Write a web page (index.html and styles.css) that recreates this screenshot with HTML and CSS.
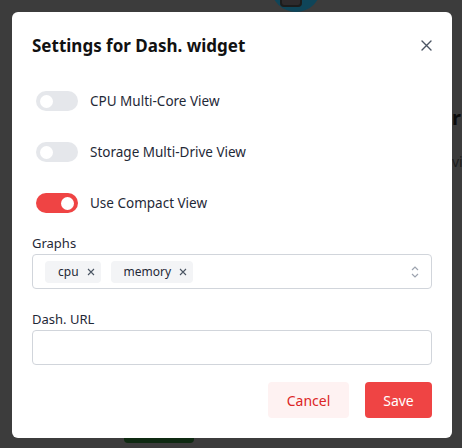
FILE: index.html
```html
<!DOCTYPE html>
<html>
<head>
<meta charset="utf-8">
<link rel="stylesheet" href="styles.css">
</head>
<body>
<div class="backdrop">
  <div class="bg-avatar"><span class="bg-avatar-icon"></span></div>
  <div class="bg-text bg-title">r</div>
  <div class="bg-text bg-sub">vi</div>
  <div class="bg-green"></div>
</div>
<div class="modal">
  <div class="modal-head">
    <h2 class="modal-title">Settings for Dash. widget</h2>
    <button class="close-btn" aria-label="Close">
      <svg width="11" height="11" viewBox="0 0 11 11"><path d="M1 1L10 10M10 1L1 10" stroke="#4b5563" stroke-width="1.4" fill="none" stroke-linecap="round"/></svg>
    </button>
  </div>
  <div class="toggles">
    <label class="toggle-row"><span class="switch"><span class="knob"></span></span><span class="toggle-label">CPU Multi-Core View</span></label>
    <label class="toggle-row"><span class="switch"><span class="knob"></span></span><span class="toggle-label">Storage Multi-Drive View</span></label>
    <label class="toggle-row"><span class="switch on"><span class="knob"></span></span><span class="toggle-label">Use Compact View</span></label>
  </div>
  <div class="field">
    <div class="field-label">Graphs</div>
    <div class="select">
      <span class="chip">cpu<svg width="8" height="8" viewBox="0 0 8 8"><path d="M1 1L7 7M7 1L1 7" stroke="#4b5563" stroke-width="1.1" fill="none"/></svg></span>
      <span class="chip">memory<svg width="8" height="8" viewBox="0 0 8 8"><path d="M1 1L7 7M7 1L1 7" stroke="#4b5563" stroke-width="1.1" fill="none"/></svg></span>
      <svg class="chevrons" width="8" height="14" viewBox="0 0 8 14"><path d="M1 5L4 2L7 5M1 9L4 12L7 9" stroke="#9ca3af" stroke-width="1.2" fill="none"/></svg>
    </div>
  </div>
  <div class="field field-url">
    <div class="field-label">Dash. URL</div>
    <div class="input"></div>
  </div>
  <div class="actions">
    <button class="btn btn-cancel">Cancel</button>
    <button class="btn btn-save">Save</button>
  </div>
</div>
</body>
</html>
```
FILE: styles.css
```css
* { box-sizing: border-box; }
html, body { margin: 0; padding: 0; }
body {
  width: 462px;
  height: 448px;
  background: #3c3c3c;
  font-family: "Noto Sans", "Open Sans", sans-serif;
  color: #111827;
  position: relative;
  overflow: hidden;
  padding: 12px 10px 10px 12px;
}
.backdrop { position: absolute; inset: 0; z-index: 0; }
.bg-avatar {
  position: absolute; left: 271px; top: -38px; width: 50px; height: 50px;
  border-radius: 50%; background: #0f4559;
}
.bg-avatar-icon {
  position: absolute; left: 9px; top: 30px; width: 22px; height: 15px;
  border: 2px solid #1c1c1c; border-radius: 4px; background: #2e2a2c;
}
.bg-text { position: absolute; color: #111; font-weight: 700; }
.bg-title { left: 452px; top: 104px; font-size: 20px; color: #0b0b0b; }
.bg-sub { left: 452px; top: 152px; font-size: 14px; font-weight: 400; color: #1c1c1c; }
.bg-green { position: absolute; left: 124px; top: 436px; width: 70px; height: 7px; background: #0f2a12; border-radius: 0 0 4px 4px; }

.modal {
  position: relative; z-index: 1;
  width: 440px; height: 426px;
  background: #fff;
  border-radius: 6px;
  padding: 22px 20px 20px 20px;
  display: flex; flex-direction: column;
}
.modal-head { display: flex; align-items: center; justify-content: space-between; height: 24px; }
.modal-title { margin: 0; font-size: 17px; font-weight: 700; color: #111; letter-spacing: 0; }
.close-btn { border: 0; background: none; padding: 0; width: 12px; height: 12px; display: flex; align-items: center; justify-content: center; margin-right: 0; cursor: pointer; }

.toggles { display: flex; flex-direction: column; gap: 31px; margin-top: 34px; }
.toggle-row { display: flex; align-items: center; gap: 12px; height: 20px; padding-left: 4px; }
.switch { width: 42px; height: 20px; border-radius: 10px; background: #e5e7eb; position: relative; display: flex; align-items: center; padding: 0 4px; }
.switch .knob { width: 13px; height: 13px; border-radius: 50%; background: #fff; }
.switch.on { background: #ef4444; justify-content: flex-end; }
.toggle-label { font-size: 13.5px; color: #1f2937; }

.field { margin-top: 21px; display: flex; flex-direction: column; }
.field-url { margin-top: 21px; }
.field-label { font-size: 13px; color: #1f2937; height: 18px; line-height: 18px; margin-bottom: 2px; }
.select {
  height: 35px; border: 1px solid #d1d5db; border-radius: 4px;
  display: flex; align-items: center; padding: 0 12px 0 12px; gap: 10px;
}
.chip {
  height: 22px; background: #f3f4f6; border-radius: 4px;
  display: flex; align-items: center; gap: 8px; padding: 0 6px 0 13px;
  font-size: 12px; color: #1f2937;
}
.chevrons { margin-left: auto; }
.input { height: 35px; border: 1px solid #d1d5db; border-radius: 4px; }

.actions { display: flex; justify-content: flex-end; gap: 16px; margin-top: 17px; }
.btn { height: 36px; border: 0; border-radius: 4px; font-family: inherit; font-size: 14px; padding: 0; }
.btn-cancel { width: 81px; background: #fef2f2; color: #dc2626; }
.btn-save { width: 67px; background: #ef4444; color: #fff; }
```
